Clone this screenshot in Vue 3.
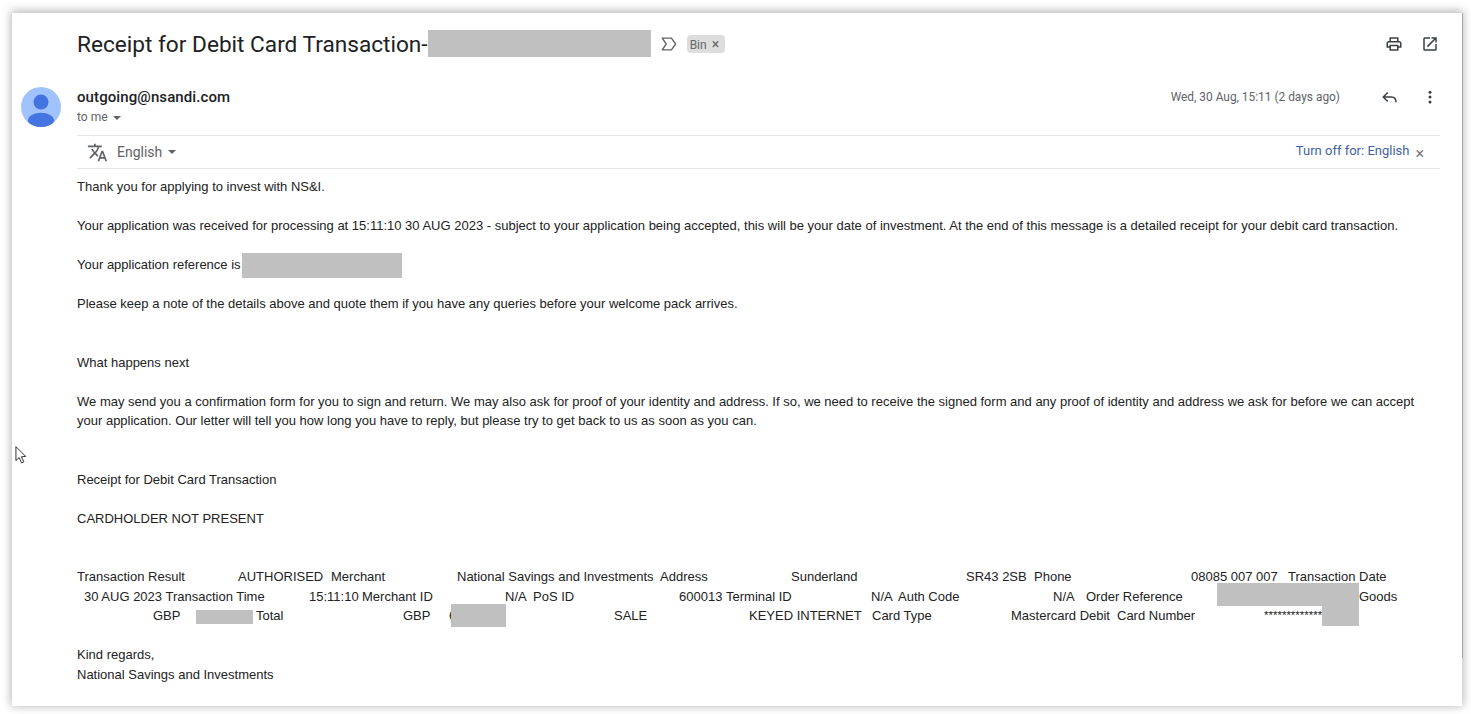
<script setup>
const rows = [
  [
    { t: 'Transaction Result', w: 161 },
    { t: 'AUTHORISED', w: 93 },
    { t: 'Merchant', w: 126 },
    { t: 'National Savings and Investments', w: 203 },
    { t: 'Address', w: 131 },
    { t: 'Sunderland', w: 175 },
    { t: 'SR43 2SB', w: 68 },
    { t: 'Phone', w: 157 },
    { t: '08085 007 007', w: 97 },
    { t: 'Transaction Date', w: 110 }
  ],
  [
    { t: '', w: 7 },
    { t: '30 AUG 2023 Transaction Time', w: 225 },
    { t: '15:11:10', w: 53 },
    { t: 'Merchant ID', w: 143 },
    { t: 'N/A', w: 28 },
    { t: 'PoS ID', w: 146 },
    { t: '600013', w: 47 },
    { t: 'Terminal ID', w: 145 },
    { t: 'N/A', w: 27 },
    { t: 'Auth Code', w: 155 },
    { t: 'N/A', w: 33 },
    { t: 'Order Reference', w: 273, redact: { left: 131, top: -4, width: 142, height: 23 } },
    { t: 'Goods', w: 60 }
  ],
  [
    { t: '', w: 76 },
    { t: 'GBP', w: 103, redact: { left: 43, top: 4, width: 57, height: 14 } },
    { t: 'Total', w: 147 },
    { t: 'GBP', w: 46 },
    { t: '6', w: 165, redact: { left: 2, top: -2, width: 55, height: 23 } },
    { t: 'SALE', w: 135 },
    { t: 'KEYED INTERNET', w: 123 },
    { t: 'Card Type', w: 139 },
    { t: 'Mastercard Debit', w: 106 },
    { t: 'Card Number', w: 147 },
    { t: '*************', w: 60, stars: true, redact: { left: 58, top: 0, width: 37, height: 20 } }
  ]
]
const px = (v) => `${v}px`
const boxStyle = (r) => ({ left: px(r.left), top: px(r.top), width: px(r.width), height: px(r.height) })
</script>

<template>
  <div class="page">
    <main class="card">
      <header class="subject-row">
        <div class="subject-left">
          <h1 class="subject">Receipt for Debit Card Transaction-<span class="redact-subject"></span></h1>
          <svg class="label-icon" viewBox="0 0 20 20" width="18" height="18"><path d="M2.500 3.500h10.200l4.600 6.500-4.600 6.500H2.500l4.400-6.500z" fill="none" stroke="#5f6368" stroke-width="1.500" stroke-linejoin="round"/></svg>
          <span class="chip">Bin <span class="chip-x">×</span></span>
        </div>
        <div class="top-icons">
          <svg viewBox="0 0 24 24" width="18" height="18" fill="#3c4043"><path d="M19 8h-1V3H6v5H5c-1.660 0-3 1.340-3 3v6h4v4h12v-4h4v-6c0-1.660-1.340-3-3-3zM8 5h8v3H8V5zm8 14H8v-4h8v4zm4-4h-2v-2H6v2H4v-4c0-.55.45-1 1-1h14c.55 0 1 .45 1 1v4z"/></svg>
          <svg viewBox="0 0 24 24" width="18" height="18" fill="#3c4043"><path d="M19 19H5V5h7V3H5a2 2 0 0 0-2 2v14a2 2 0 0 0 2 2h14c1.100 0 2-.9 2-2v-7h-2v7zM14 3v2h3.590l-9.830 9.830 1.410 1.410L19 6.410V10h2V3h-7z"/></svg>
        </div>
      </header>

      <section class="sender-row">
        <svg class="avatar" viewBox="0 0 40 40" width="40" height="40">
          <defs><clipPath id="avatar-clip"><circle cx="20" cy="20" r="20"/></clipPath></defs>
          <circle cx="20" cy="20" r="20" fill="#a0c3ff"/>
          <circle cx="20" cy="15" r="7.500" fill="#4374e0"/>
          <ellipse cx="20" cy="33.500" rx="13" ry="7.800" fill="#4374e0" clip-path="url(#avatar-clip)"/>
        </svg>
        <div class="sender-main">
          <div class="sender-line">
            <div class="who">
              <div class="from">outgoing@nsandi.com</div>
              <div class="to">to me <span class="caret small"></span></div>
            </div>
            <div class="meta">
              <span class="date">Wed, 30 Aug, 15:11 (2 days ago)</span>
              <svg class="reply" viewBox="0 0 24 24" width="18" height="18" fill="none" stroke="#3c4043" stroke-width="2"><path d="M9 6l-6 6 6 6M3.500 12H14c4 0 6 2.500 6 7"/></svg>
              <svg class="more" viewBox="0 0 24 24" width="18" height="18" fill="#3c4043"><circle cx="12" cy="5.500" r="2"/><circle cx="12" cy="12" r="2"/><circle cx="12" cy="18.500" r="2"/></svg>
            </div>
          </div>
        </div>
      </section>

      <section class="translate-bar">
        <div class="lang">
          <svg viewBox="0 0 24 24" width="21" height="21" fill="#5f6368"><path d="M12.870 15.070l-2.540-2.510.03-.03c1.740-1.940 2.980-4.170 3.710-6.530H17V4h-7V2H8v2H1v1.990h11.170C11.500 7.920 10.440 9.750 9 11.350 8.070 10.320 7.300 9.190 6.690 8h-2c.73 1.630 1.730 3.170 2.980 4.560l-5.090 5.020L4 19l5-5 3.110 3.110.76-2.040zM18.500 10h-2L12 22h2l1.120-3h4.750L21 22h2l-4.500-12zm-2.620 7l1.620-4.330L19.120 17h-3.240z"/></svg>
          <span class="lang-name">English</span>
          <span class="caret"></span>
        </div>
        <div class="turn-off">
          <span class="turn-link">Turn off for: English</span>
          <span class="turn-x">×</span>
        </div>
      </section>

      <article class="body">
        <p>Thank you for applying to invest with NS&amp;I.</p>
        <p>Your application was received for processing at 15:11:10 30 AUG 2023 - subject to your application being accepted, this will be your date of investment. At the end of this message is a detailed receipt for your debit card transaction.</p>
        <p>Your application reference is <span class="redact-ref"></span></p>
        <p class="gap-after">Please keep a note of the details above and quote them if you have any queries before your welcome pack arrives.</p>
        <p>What happens next</p>
        <p class="gap-after">We may send you a confirmation form for you to sign and return. We may also ask for proof of your identity and address. If so, we need to receive the signed form and any proof of identity and address we ask for before we can accept your application. Our letter will tell you how long you have to reply, but please try to get back to us as soon as you can.</p>
        <p>Receipt for Debit Card Transaction</p>
        <p class="gap-after">CARDHOLDER NOT PRESENT</p>
        <div class="receipt">
          <div v-for="(row, i) in rows" :key="i" class="receipt-row">
            <span v-for="(c, j) in row" :key="j" class="cell" :class="{ stars: c.stars }" :style="{ width: px(c.w) }">
              {{ c.t }}
              <i v-if="c.redact" class="redact" :style="boxStyle(c.redact)"></i>
            </span>
          </div>
        </div>
        <p class="sign">Kind regards,<br>National Savings and Investments</p>
      </article>

      <svg class="cursor" viewBox="0 0 14 20" width="13" height="20"><path d="M1 1v15l3.500-3.200 2.600 5.700 2.400-1.100-2.600-5.500 4.600-.4z" fill="#fff" stroke="#222" stroke-width="1"/></svg>
      <span class="edge-line"></span>
    </main>
  </div>
</template>

<style>
html, body { margin: 0; background: #fff; }
</style>

<style scoped>
.page {
  width: 1471px;
  height: 714px;
  box-sizing: border-box;
  padding: 13px 9px 8px 12px;
  overflow: hidden;
  background: #fff;
  font-family: "Liberation Sans", Arial, sans-serif;
}
.card {
  position: relative;
  height: 100%;
  box-sizing: border-box;
  padding: 0 22px 0 9px;
  background: #fff;
  box-shadow: 0 -1px 9px 1px rgba(0, 0, 0, .3);
}
.subject-row {
  display: flex;
  justify-content: space-between;
  align-items: center;
  height: 62px;
  padding-left: 56px;
}
.subject-left { display: flex; align-items: center; }
.subject {
  margin: 0;
  display: flex;
  align-items: center;
  font: 400 22.630px Roboto, sans-serif;
  color: #202124;
}
.redact-subject { width: 223px; height: 27px; margin-bottom: 1px; background: #c0c0c0; }
.label-icon { margin-left: 9px; }
.chip {
  box-sizing: border-box;
  width: 38px;
  margin-left: 9px;
  padding-left: 3px;
  height: 18px;
  border-radius: 4px;
  background: #dddddd;
  color: #666;
  font: 12px/18px Roboto, sans-serif;
  white-space: nowrap;
}
.chip-x { margin-left: 2px; color: #666; font-size: 14px; }
.top-icons { display: flex; gap: 18px; margin-right: 1px; }
.sender-row { display: flex; height: 61px; }
.avatar { flex: none; margin: 12px 16px 0 0; }
.sender-main { flex: 1; border-bottom: 1px solid #e6e6e6; }
.sender-line { display: flex; justify-content: space-between; }
.from { margin-top: 13px; font: 500 15px/18px Roboto, sans-serif; letter-spacing: .1px; color: #202124; }
.to { margin-top: 3px; font: 12px/16px Roboto, sans-serif; color: #5f6368; }
.meta { display: flex; align-items: center; height: 18px; margin-top: 13px; }
.date { font: 11.900px Roboto, sans-serif; color: #5f6368; }
.reply { margin-left: 41px; }
.more { margin: 0 1px 0 22px; }
.caret {
  display: inline-block;
  margin-left: 6px;
  border-left: 4px solid transparent;
  border-right: 4px solid transparent;
  border-top: 4px solid #5f6368;
  vertical-align: middle;
}
.caret.small { margin-left: 2px; }
.translate-bar {
  display: flex;
  justify-content: space-between;
  align-items: center;
  height: 32px;
  margin-left: 56px;
  border-bottom: 1px solid #e6e6e6;
}
.lang { display: flex; align-items: center; padding-left: 10px; }
.lang-name { margin-left: 9px; font: 14px Roboto, sans-serif; color: #5f6368; }
.turn-off { display: flex; align-items: center; }
.turn-link { margin-bottom: 4px; font: 13px Roboto, sans-serif; color: #3f5fa3; }
.turn-x { margin: 3px 16px 0 6px; font: 16px/16px Roboto, sans-serif; color: #777; }
.body {
  margin-left: 56px;
  padding-top: 8px;
  font-size: 13px;
  line-height: 19.500px;
  color: #222;
}
.body p { margin: 0 0 19.500px; }
.body p.gap-after { margin-bottom: 39px; }
.body p.sign { margin: 0; }
.redact-ref {
  display: inline-block;
  width: 160px;
  height: 25px;
  margin: -4px 0 -4px -2px;
  background: #c0c0c0;
  vertical-align: middle;
}
.receipt { margin-bottom: 19.500px; }
.receipt-row { display: flex; }
.cell {
  position: relative;
  flex: none;
  white-space: nowrap;
}
.stars { font-size: 11.500px; }
.redact { position: absolute; background: #c0c0c0; }
.cursor { position: absolute; left: 3px; top: 432px; }
.edge-line {
  position: absolute;
  right: -1px;
  top: 0;
  bottom: 48px;
  width: 1px;
  background: #a8a8a8;
}
</style>
